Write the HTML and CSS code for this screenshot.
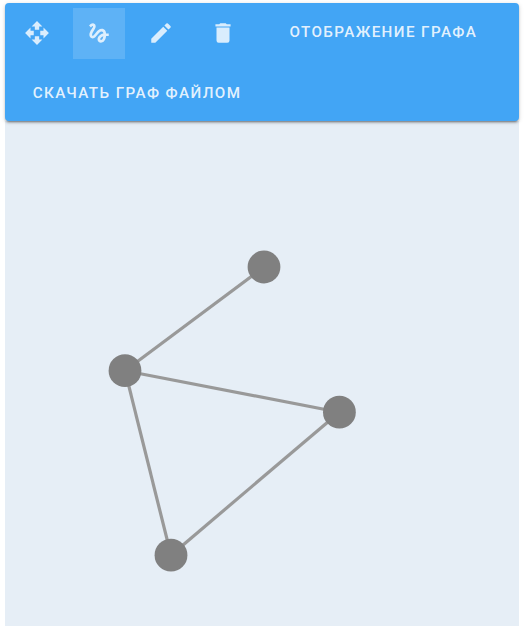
FILE: index.html
```html
<!DOCTYPE html>
<html lang="ru">
<head>
<meta charset="utf-8">
<title>Граф</title>
<link rel="stylesheet" href="styles.css">
</head>
<body>
<main class="editor">
  <header class="toolbar">
    <button class="tool" aria-label="Переместить"><svg class="icon" viewBox="0 0 24 24"><path d="M10 9h4V6h3l-5-5-5 5h3v3zm-1 1H6V7l-5 5 5 5v-3h3v-4zm14 2l-5-5v3h-3v4h3v3l5-5zm-9 3h-4v3H7l5 5 5-5h-3v-3z"/></svg></button>
    <button class="tool active" aria-label="Соединить"><svg class="icon" viewBox="0 0 24 24"><path d="M4.59 6.89c.7-.71 1.4-1.35 1.71-1.22.5.2 0 1.03-.3 1.52-.25.42-2.86 3.89-2.86 6.31 0 1.28.48 2.34 1.34 2.98.75.56 1.74.73 2.64.46 1.07-.31 1.95-1.4 3.06-2.77 1.21-1.49 2.83-3.44 4.08-3.44 1.63 0 1.65 1.01 1.76 1.79-3.78.64-5.38 3.67-5.38 5.37 0 1.7 1.44 3.09 3.21 3.09 1.63 0 4.29-1.33 4.69-6.1H21v-2.5h-2.47c-.15-1.65-1.09-4.2-4.03-4.2-2.25 0-4.18 1.91-4.94 2.84-.58.73-2.06 2.48-2.29 2.72-.25.3-.68.84-1.11.84-.45 0-.72-.83-.36-1.92.35-1.09 1.4-2.86 1.85-3.52.78-1.14 1.3-1.92 1.3-3.28C8.95 3.69 7.31 3 6.44 3 5.12 3 3.97 4 3.72 4.25c-.36.36-.66.66-.88.93l1.75 1.71zm9.29 11.66c-.31 0-.74-.26-.74-.72 0-.6.73-2.2 2.87-2.76-.3 2.69-1.43 3.48-2.13 3.48z"/></svg></button>
    <button class="tool" aria-label="Изменить"><svg class="icon" viewBox="0 0 24 24"><path d="M3 17.25V21h3.75L17.81 9.94l-3.75-3.75L3 17.25zM20.71 7.04a1 1 0 0 0 0-1.41l-2.34-2.34a1 1 0 0 0-1.41 0l-1.83 1.83 3.75 3.75 1.83-1.83z"/></svg></button>
    <button class="tool" aria-label="Удалить"><svg class="icon" viewBox="0 0 24 24"><path d="M6 19a2 2 0 0 0 2 2h8a2 2 0 0 0 2-2V7H6v12zM19 4h-3.5l-1-1h-5l-1 1H5v2h14V4z"/></svg></button>
    <button class="action view">Отображение графа</button>
    <button class="action download">Скачать граф файлом</button>
  </header>
  <svg class="graph" viewBox="5 121 514 505">
    <g class="edges">
      <line x1="264" y1="267" x2="125" y2="370.7"/>
      <line x1="125" y1="370.7" x2="339.4" y2="412.2"/>
      <line x1="125" y1="370.7" x2="171" y2="555.2"/>
      <line x1="339.4" y1="412.2" x2="171" y2="555.2"/>
    </g>
    <g class="nodes">
      <circle cx="264" cy="267" r="16.4"/>
      <circle cx="125" cy="370.7" r="16.4"/>
      <circle cx="339.4" cy="412.2" r="16.4"/>
      <circle cx="171" cy="555.2" r="16.4"/>
    </g>
  </svg>
</main>
</body>
</html>
```
FILE: styles.css
```css
* {
  box-sizing: border-box;
}

body {
  margin: 0;
  background: #fff;
  font-family: Roboto, "Liberation Sans", sans-serif;
  overflow: hidden;
}

.editor {
  width: 514px;
  height: 626px;
  margin-left: 5px;
  padding-top: 3px;
  display: flex;
  flex-direction: column;
}

.toolbar {
  flex: none;
  height: 118px;
  padding: 5px 6px;
  display: flex;
  flex-wrap: wrap;
  align-content: flex-start;
  column-gap: 10px;
  row-gap: 10px;
  border-radius: 4px;
  background: #42a5f5;
  box-shadow: 0 3px 1px -2px rgba(0, 0, 0, .2), 0 2px 2px rgba(0, 0, 0, .2), 0 1px 5px rgba(0, 0, 0, .14);
  z-index: 1;
}

button {
  border: 0;
  padding: 0;
  background: none;
  font: inherit;
}

.tool {
  width: 52px;
  height: 51px;
  padding: 0 1px 1px 0;
  display: flex;
  align-items: center;
  justify-content: center;
}

.active {
  background: rgba(255, 255, 255, .15);
}

.icon {
  width: 26px;
  height: 26px;
  fill: #fff;
  opacity: .8;
}

.action {
  height: 51px;
  padding-bottom: 3px;
  color: rgba(255, 255, 255, .87);
  font-size: 15.2px;
  font-weight: 500;
  line-height: 48px;
  letter-spacing: 1.4px;
  text-transform: uppercase;
  white-space: nowrap;
}

.view {
  margin-left: 30.5px;
}

.download {
  margin-left: 21.7px;
}

.graph {
  display: block;
  width: 514px;
  height: 505px;
  flex: none;
  background: #e6eef6;
}

.edges {
  stroke: #999;
  stroke-width: 3.2;
}

.nodes {
  fill: #808080;
}
```
